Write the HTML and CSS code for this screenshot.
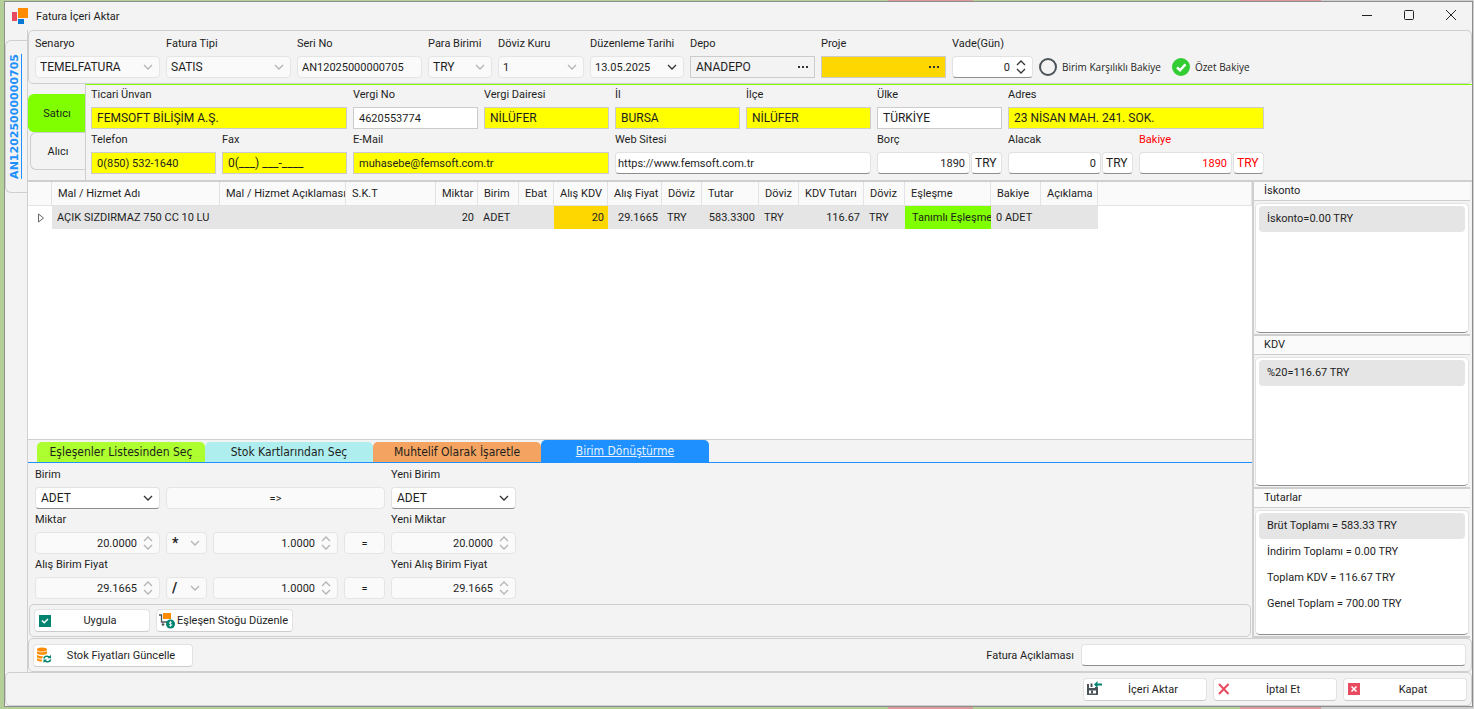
FILE: index.html
```html
<!DOCTYPE html>
<html lang="tr">
<head>
    <meta charset="UTF-8">
    <meta name="viewport" content="width=device-width, initial-scale=1.0">
    <title>Fatura İçeri Aktar</title>
    <link rel="stylesheet" href="styles.css">
</head>
<body>
    <!-- Shared icons -->
    <svg class="defs" width="0" height="0">
        <symbol id="chevron" viewBox="0 0 10 6"><path d="M1 1l4 4 4-4" fill="none" stroke="currentColor" stroke-width="1.3"/></symbol>
        <symbol id="spin" viewBox="0 0 10 14"><path d="M1 5l4-4 4 4M1 9l4 4 4-4" fill="none" stroke="currentColor" stroke-width="1.3"/></symbol>
        <symbol id="dots" viewBox="0 0 10 2"><path d="M0 0h2v2H0zM4 0h2v2H4zM8 0h2v2H8z" fill="currentColor"/></symbol>
    </svg>

    <div class="window">
        <header class="titlebar">
            <svg class="app-icon" viewBox="0 0 16 16">
                <path d="M0 4h5v9H0z" fill="#e84a5f"/>
                <path d="M6 0h10v10H6z" fill="#ff8c00"/>
                <path d="M6 11h6v5H6z" fill="#0078d4"/>
            </svg>
            <h1>Fatura İçeri Aktar</h1>
            <button class="win-btn" aria-label="Simge Durumuna Küçült"><svg viewBox="0 0 12 12"><path d="M1 6.500h10" stroke="#222" fill="none"/></svg></button>
            <button class="win-btn" aria-label="Ekranı Kapla"><svg viewBox="0 0 12 12"><rect x="1.500" y="1.500" width="9" height="9" rx="1" stroke="#222" fill="none"/></svg></button>
            <button class="win-btn" aria-label="Pencereyi Kapat"><svg viewBox="0 0 12 12"><path d="M1 1l10 10M11 1L1 11" stroke="#222" fill="none"/></svg></button>
        </header>

        <div class="workspace">
            <nav class="side-tabs">
                <button class="invoice-tab"><span>AN12025000000705</span></button>
            </nav>

            <main class="content">
                <section class="panel invoice-info">
                    <div class="field w-m">
                        <label for="senaryo">Senaryo</label>
                        <div class="control"><select id="senaryo" class="caps" disabled><option>TEMELFATURA</option></select><svg class="arrow"><use href="#chevron"/></svg></div>
                    </div>
                    <div class="field w-m">
                        <label for="tip">Fatura Tipi</label>
                        <div class="control"><select id="tip" class="caps" disabled><option>SATIS</option></select><svg class="arrow"><use href="#chevron"/></svg></div>
                    </div>
                    <div class="field w-m">
                        <label for="seri">Seri No</label>
                        <div class="control"><input id="seri" type="text" value="AN12025000000705" disabled></div>
                    </div>
                    <div class="field w-s">
                        <label for="para">Para Birimi</label>
                        <div class="control"><select id="para" class="caps" disabled><option>TRY</option></select><svg class="arrow"><use href="#chevron"/></svg></div>
                    </div>
                    <div class="field w-kur">
                        <label for="kur">Döviz Kuru</label>
                        <div class="control"><select id="kur" disabled><option>1</option></select><svg class="arrow"><use href="#chevron"/></svg></div>
                    </div>
                    <div class="field w-date">
                        <label for="tarih">Düzenleme Tarihi</label>
                        <div class="control"><input id="tarih" class="soft" type="text" value="13.05.2025"><svg class="arrow dark"><use href="#chevron"/></svg></div>
                    </div>
                    <div class="field w-m">
                        <label for="depo">Depo</label>
                        <div class="control"><input id="depo" class="square gray caps" type="text" value="ANADEPO"><svg class="arrow dots"><use href="#dots"/></svg></div>
                    </div>
                    <div class="field w-m">
                        <label for="proje">Proje</label>
                        <div class="control"><input id="proje" class="square gold" type="text"><svg class="arrow dots"><use href="#dots"/></svg></div>
                    </div>
                    <div class="field w-vade">
                        <label for="vade">Vade(Gün)</label>
                        <div class="control"><input id="vade" class="num spin" type="text" value="0"><svg class="arrow dark updown"><use href="#spin"/></svg></div>
                    </div>
                    <label class="toggle"><input type="checkbox">Birim Karşılıklı Bakiye</label>
                    <label class="toggle">
                        <input type="checkbox" checked>
                        <svg class="tick" viewBox="0 0 18 18"><path d="M5 9.300l3 3 5.500-6" fill="none" stroke="#fff" stroke-width="2.500"/></svg>
                        Özet Bakiye
                    </label>
                </section>

                <section class="party">
                    <div class="party-tabs">
                        <button class="party-tab active">Satıcı</button>
                        <button class="party-tab">Alıcı</button>
                    </div>
                    <div class="party-form">
                        <div class="field span-2"><label for="unvan">Ticari Ünvan</label><input id="unvan" class="square yellow caps" type="text" value="FEMSOFT BİLİŞİM A.Ş."></div>
                        <div class="field"><label for="vergino">Vergi No</label><input id="vergino" class="square" type="text" value="4620553774"></div>
                        <div class="field"><label for="daire">Vergi Dairesi</label><input id="daire" class="square yellow caps" type="text" value="NİLÜFER"></div>
                        <div class="field"><label for="il">İl</label><input id="il" class="square yellow caps" type="text" value="BURSA"></div>
                        <div class="field"><label for="ilce">İlçe</label><input id="ilce" class="square yellow caps" type="text" value="NİLÜFER"></div>
                        <div class="field"><label for="ulke">Ülke</label><input id="ulke" class="square caps" type="text" value="TÜRKİYE"></div>
                        <div class="field span-2"><label for="adres">Adres</label><input id="adres" class="square yellow caps" type="text" value="23 NİSAN MAH. 241. SOK."></div>

                        <div class="field"><label for="tel">Telefon</label><input id="tel" class="square yellow" type="text" value="0(850) 532-1640"></div>
                        <div class="field"><label for="fax">Fax</label><input id="fax" class="square yellow caps" type="text" value="0(___) ___-____"></div>
                        <div class="field span-2"><label for="mail">E-Mail</label><input id="mail" class="square yellow" type="text" value="muhasebe@femsoft.com.tr"></div>
                        <div class="field span-2"><label for="web">Web Sitesi</label><input id="web" class="tight" type="text" value="https://www.femsoft.com.tr"></div>
                        <div class="field"><label for="borc">Borç</label><div class="money"><input id="borc" class="num" type="text" value="1890"><input class="cur caps" type="text" value="TRY" aria-label="Borç dövizi"></div></div>
                        <div class="field"><label for="alacak">Alacak</label><div class="money"><input id="alacak" class="num" type="text" value="0"><input class="cur caps" type="text" value="TRY" aria-label="Alacak dövizi"></div></div>
                        <div class="field red"><label for="bakiye">Bakiye</label><div class="money"><input id="bakiye" class="num" type="text" value="1890"><input class="cur caps" type="text" value="TRY" aria-label="Bakiye dövizi"></div></div>
                    </div>
                </section>

                <div class="body-row">
                    <div class="left">
                        <div class="grid">
                            <table>
                                <colgroup>
                                    <col class="c24"><col class="c168"><col class="c126"><col class="c90"><col class="c42"><col class="c41"><col class="c35"><col class="c54"><col class="c54"><col class="c40"><col class="c57"><col class="c40"><col class="c65"><col class="c41"><col class="c86"><col class="c50"><col class="c57"><col>
                                </colgroup>
                                <thead>
                                    <tr>
                                        <th></th><th>Mal / Hizmet Adı</th><th>Mal / Hizmet Açıklaması</th><th>S.K.T</th><th>Miktar</th><th>Birim</th><th>Ebat</th><th>Alış KDV</th><th>Alış Fiyat</th><th>Döviz</th><th>Tutar</th><th>Döviz</th><th>KDV Tutarı</th><th>Döviz</th><th>Eşleşme</th><th>Bakiye</th><th>Açıklama</th><th></th>
                                    </tr>
                                </thead>
                                <tbody>
                                    <tr>
                                        <td class="marker"><svg viewBox="0 0 6 10"><path d="M.5 1v8L5.500 5z" fill="none" stroke="#666"/></svg></td>
                                        <td>AÇIK SIZDIRMAZ 750 CC 10 LU</td><td></td><td></td>
                                        <td class="r">20</td><td>ADET</td><td></td>
                                        <td class="r gold">20</td><td class="r">29.1665</td><td>TRY</td>
                                        <td class="r">583.3300</td><td>TRY</td>
                                        <td class="r">116.67</td><td>TRY</td>
                                        <td class="match">Tanımlı Eşleşme</td><td>0 ADET</td><td></td>
                                        <td class="rest"></td>
                                    </tr>
                                </tbody>
                            </table>
                        </div>

                        <nav class="tabs">
                            <button class="tab t-match">Eşleşenler Listesinden Seç</button>
                            <button class="tab t-stock">Stok Kartlarından Seç</button>
                            <button class="tab t-misc">Muhtelif Olarak İşaretle</button>
                            <button class="tab t-unit">Birim Dönüştürme</button>
                        </nav>

                        <div class="unit-form">
                            <div class="field"><label for="birim">Birim</label><div class="control"><select id="birim" class="caps"><option>ADET</option></select><svg class="arrow dark"><use href="#chevron"/></svg></div></div>
                            <button class="op span-3" disabled>=&gt;</button>
                            <div class="field"><label for="ybirim">Yeni Birim</label><div class="control"><select id="ybirim" class="caps"><option>ADET</option></select><svg class="arrow dark"><use href="#chevron"/></svg></div></div>

                            <div class="field"><label for="miktar">Miktar</label><div class="control"><input id="miktar" class="num spin" type="text" value="20.0000" disabled><svg class="arrow updown"><use href="#spin"/></svg></div></div>
                            <div class="control end"><select class="bold" aria-label="Miktar işlemi" disabled><option>*</option></select><svg class="arrow"><use href="#chevron"/></svg></div>
                            <div class="control end"><input class="num spin" type="text" value="1.0000" aria-label="Miktar katsayısı" disabled><svg class="arrow updown"><use href="#spin"/></svg></div>
                            <button class="op" disabled>=</button>
                            <div class="field"><label for="ymiktar">Yeni Miktar</label><div class="control"><input id="ymiktar" class="num spin" type="text" value="20.0000" disabled><svg class="arrow updown"><use href="#spin"/></svg></div></div>

                            <div class="field"><label for="fiyat">Alış Birim Fiyat</label><div class="control"><input id="fiyat" class="num spin" type="text" value="29.1665" disabled><svg class="arrow updown"><use href="#spin"/></svg></div></div>
                            <div class="control end"><select class="bold" aria-label="Fiyat işlemi" disabled><option>/</option></select><svg class="arrow"><use href="#chevron"/></svg></div>
                            <div class="control end"><input class="num spin" type="text" value="1.0000" aria-label="Fiyat katsayısı" disabled><svg class="arrow updown"><use href="#spin"/></svg></div>
                            <button class="op" disabled>=</button>
                            <div class="field"><label for="yfiyat">Yeni Alış Birim Fiyat</label><div class="control"><input id="yfiyat" class="num spin" type="text" value="29.1665" disabled><svg class="arrow updown"><use href="#spin"/></svg></div></div>
                        </div>

                        <div class="panel actions">
                            <button class="btn w-apply">
                                <svg viewBox="0 0 16 16"><path d="M2 2h12v12H2z" fill="#00836f"/><path d="M5 7.500l2.200 2.300L11 6" fill="none" stroke="#fff" stroke-width="1.500"/></svg>
                                <span>Uygula</span>
                            </button>
                            <button class="btn w-edit">
                                <svg viewBox="0 0 16 16"><path d="M0 2h2.500v7H11" fill="none" stroke="#4a5358" stroke-width="1.300"/><path d="M4 0h8v6H4z" fill="#ff8c00"/><circle cx="4" cy="11.500" r="1.300" fill="#4a5358"/><circle cx="11.500" cy="11" r="4.500" fill="#00836f"/><path d="M13 9.500c-1-.8-2.800-.6-2.800.5s2.800.8 2.800 1.900-1.900 1.300-3 .5M11.500 8.300v5.400" fill="none" stroke="#fff" stroke-width=".8"/></svg>
                                <span>Eşleşen Stoğu Düzenle</span>
                            </button>
                        </div>
                    </div>

                    <aside class="summary">
                        <section class="group g-discount">
                            <h2>İskonto</h2>
                            <ul><li class="selected">İskonto=0.00 TRY</li></ul>
                        </section>
                        <section class="group g-vat">
                            <h2>KDV</h2>
                            <ul><li class="selected">%20=116.67 TRY</li></ul>
                        </section>
                        <section class="group g-total">
                            <h2>Tutarlar</h2>
                            <ul>
                                <li class="selected">Brüt Toplamı = 583.33 TRY</li>
                                <li>İndirim Toplamı = 0.00 TRY</li>
                                <li>Toplam KDV = 116.67 TRY</li>
                                <li>Genel Toplam = 700.00 TRY</li>
                            </ul>
                        </section>
                    </aside>
                </div>

                <section class="panel note-row">
                    <button class="btn w-price">
                        <svg viewBox="0 0 16 16"><ellipse cx="6" cy="2.500" rx="5" ry="2" fill="#ff8c00"/><path d="M1 3.800c1 2 9 2 10 0v2.500c-1 2-9 2-10 0zM1 7.500c1 1.600 4 1.900 6 1.500L6 11.500c-2 .2-4.500-.2-5-1.500zM1 11c1 1.200 3 1.600 5 1.500v2c-2 .1-4.500-.2-5-1.500z" fill="#ff8c00"/><path d="M7.700 11.500c.6-2.600 4.300-3.200 5.900-1M14.700 12.500c-.6 2.600-4.300 3.200-5.900 1" fill="none" stroke="#00836f" stroke-width="1.500"/><path d="M15 7.800v3.500h-3.500zM7.500 16v-3.500H11z" fill="#00836f"/></svg>
                        <span>Stok Fiyatları Güncelle</span>
                    </button>
                    <label for="aciklama">Fatura Açıklaması</label>
                    <input id="aciklama" type="text">
                </section>
            </main>
        </div>

        <footer class="panel footer">
            <button class="btn w-foot">
                <svg viewBox="0 0 16 16"><path d="M1 3h2v4h6V6h3v8H1z" fill="#4a5358"/><path d="M4.500 2.500h2V6h-2z" fill="#4a5358"/><path d="M3 9.500h7v3H3z" fill="#fff"/><path d="M5 9.500h2v3H5z" fill="#4a5358"/><path d="M8 3.500L11.500 0v2.500H16v2h-4.500V7z" fill="#00836f"/></svg>
                <span>İçeri Aktar</span>
            </button>
            <button class="btn w-foot">
                <svg viewBox="0 0 16 16"><path d="M3 3l9.500 10M12.500 3L3 13" stroke="#e84a5f" stroke-width="2" fill="none"/></svg>
                <span>İptal Et</span>
            </button>
            <button class="btn w-foot">
                <svg viewBox="0 0 16 16"><path d="M2 2h12v12H2z" fill="#e84a5f"/><path d="M5.500 5.500l5 5M10.500 5.500l-5 5" stroke="#fff" stroke-width="1.600" fill="none"/></svg>
                <span>Kapat</span>
            </button>
        </footer>
    </div>
</body>
</html>
```
FILE: styles.css
```css
* {
    box-sizing: border-box;
}
body {
    margin: 0;
    height: 100vh;
    min-height: 660px;
    padding: 1px 1px 2px 4px;
    background: linear-gradient(90deg, #b4cf98 888px, #dd9c9c 888px, #dd9c9c 973px, #b4cf98 973px, #b4cf98 1240px, #dd9c9c 1240px, #dd9c9c 1321px, #cfcfcf 1321px);
    font-family: Roboto, sans-serif;
    font-size: 11px;
    color: #1e1e1e;
}
h1, h2, ul {
    margin: 0;
    padding: 0;
    font-size: 11px;
    font-weight: 400;
    list-style: none;
}
button, input, select {
    font: inherit;
    color: inherit;
    opacity: 1;
    margin: 0;
}
.defs {
    position: absolute;
}
.window {
    height: 100%;
    display: flex;
    flex-direction: column;
    background: #f3f3f3;
    border: 1px solid #8e8e8e;
}
.panel {
    border: 1px solid #cfcfcf;
    border-radius: 5px;
}

/* Title bar */
.titlebar {
    height: 28px;
    display: flex;
    align-items: center;
    padding-left: 7px;
}
.titlebar h1 {
    flex: 1;
    padding-left: 8px;
}
.app-icon {
    width: 16px;
    height: 16px;
}
.win-btn {
    width: 42px;
    height: 28px;
    padding: 0;
    border: 0;
    background: none;
}
.win-btn svg {
    width: 12px;
    height: 12px;
}

/* Left vertical tab */
.workspace {
    flex: 1;
    min-height: 0;
    display: flex;
}
.side-tabs {
    width: 22px;
    padding-top: 10px;
}
.invoice-tab {
    width: 22px;
    height: 153px;
    padding: 0 0 0 3px;
    border: 1px solid #cfcfcf;
    border-right: 0;
    border-radius: 6px 0 0 6px;
    background: #f3f3f3;
    display: flex;
    align-items: center;
    color: #1e90ff;
    font: bold 11px "DejaVu Sans", sans-serif;
}
.invoice-tab span {
    writing-mode: vertical-rl;
    transform: rotate(180deg);
    line-height: 12px;
    border-left: 1px solid #1e90ff;
}
.content {
    flex: 1;
    min-width: 0;
    display: flex;
    flex-direction: column;
    border-left: 1px solid #cfcfcf;
}

/* Fields */
.field label {
    display: block;
    line-height: 16px;
    margin-bottom: 4px;
    white-space: nowrap;
}
input[type=text], select {
    display: block;
    width: 100%;
    height: 22px;
    padding: 0 5px;
    border: 1px solid #e2e2e2;
    border-bottom-color: #8e8e8e;
    border-radius: 4px;
    background: #fff;
    appearance: none;
    outline: none;
}
input.caps, select.caps {
    font-size: 12px;
}
input.square {
    border-color: #cccccc;
    border-radius: 0;
}
input.soft, input:disabled, select:disabled {
    padding: 0 4px;
    border-color: #e5e5e5;
    background: #fafafa;
}
input.tight {
    padding: 0 2px;
}
input.yellow {
    background: #ffff00;
}
input.gray {
    background: #f3f3f3;
}
input.gold, .gold {
    background: #ffd700;
}
input.num {
    text-align: right;
    padding: 0 4px;
}
input.spin {
    padding-right: 22px;
}
select.bold {
    padding-left: 5px;
    font-size: 14px;
    font-weight: 700;
}
.control {
    position: relative;
}
.arrow {
    position: absolute;
    right: 7px;
    top: 8px;
    width: 10px;
    height: 6px;
    color: #b4b4b4;
    pointer-events: none;
}
.arrow.dark {
    color: #333;
}
.arrow.dots {
    top: 10px;
    height: 2px;
    color: #333;
}
.arrow.updown {
    top: 4px;
    height: 14px;
}
.w-s { width: 64px; }
.w-m { width: 125px; }
.w-kur { width: 86px; }
.w-date { width: 94px; }
.w-vade { width: 81px; }

/* Invoice header row */
.invoice-info {
    display: flex;
    gap: 6px;
    padding: 5px 6px;
    height: 54px;
}
.toggle {
    position: relative;
    align-self: flex-end;
    height: 22px;
    display: flex;
    align-items: center;
    gap: 5px;
    margin-right: 5px;
    white-space: nowrap;
    font: 10px "Open Sans", sans-serif;
}
.toggle input {
    width: 18px;
    height: 18px;
    border: 2px solid #4a5358;
    border-radius: 50%;
    appearance: none;
}
.toggle input:checked {
    border-color: #32cd32;
    background: #32cd32;
}
.tick {
    position: absolute;
    left: 0;
    top: 2px;
    width: 18px;
    height: 18px;
}

/* Seller / buyer */
.party {
    display: flex;
    height: 96px;
}
.party-tabs {
    width: 57px;
    padding-top: 10px;
    display: flex;
    flex-direction: column;
}
.party-tab {
    height: 38px;
    margin-left: 2px;
    border: 1px solid #cfcfcf;
    border-right: 0;
    border-radius: 6px 0 0 6px;
    background: #f3f3f3;
}
.party-tab.active {
    margin-left: 0;
    border-color: #7fff00;
    background: #7fff00;
}
.party-form {
    flex: 1;
    display: grid;
    grid-template-columns: repeat(9, 125px);
    gap: 3px 6px;
    align-content: start;
    padding: 2px 5px;
    border-top: 1px solid #7fff00;
    border-left: 1px solid #cfcfcf;
}
.span-2 { grid-column: span 2; }
.span-3 { grid-column: span 3; }
.money {
    display: flex;
    gap: 1px;
}
.money input.num {
    flex: 1;
    min-width: 0;
}
.money input.cur {
    width: 31px;
    padding: 0 3px;
}
.red {
    color: #ff0000;
}

/* Item grid */
.body-row {
    flex: 1;
    min-height: 0;
    display: flex;
    border-top: 2px solid #cfcfcf;
}
.left {
    flex: 1;
    min-width: 0;
    display: flex;
    flex-direction: column;
}
.grid {
    flex: 1;
    min-height: 0;
    overflow: hidden;
    background: #fff;
    border-bottom: 1px solid #cfcfcf;
}
table {
    width: 100%;
    table-layout: fixed;
    border-collapse: separate;
    border-spacing: 0;
}
th, td {
    padding: 0 0 0 5px;
    height: 24px;
    text-align: left;
    font-weight: 400;
    white-space: nowrap;
    overflow: hidden;
}
th {
    padding-left: 6px;
    background: #fafafa;
    border-right: 1px solid #e3e3e3;
    border-bottom: 1px solid #e3e3e3;
}
td {
    height: 23px;
    background: #e5e5e5;
}
td.r {
    padding-right: 4px;
    text-align: right;
}
td.gold {
    background: #ffd700;
}
td.match {
    padding-left: 7px;
    background: #7fff00;
}
td.marker, td.rest {
    background: #fff;
}
td.marker svg {
    display: block;
    width: 6px;
    height: 10px;
    margin-left: 5px;
}
.c24 { width: 24px; }
.c35 { width: 35px; }
.c40 { width: 40px; }
.c41 { width: 41px; }
.c42 { width: 42px; }
.c50 { width: 50px; }
.c54 { width: 54px; }
.c57 { width: 57px; }
.c65 { width: 65px; }
.c86 { width: 86px; }
.c90 { width: 90px; }
.c126 { width: 126px; }
.c168 { width: 168px; }

/* Matching tabs */
.tabs {
    display: flex;
    align-items: flex-end;
    height: 23px;
    padding-left: 9px;
    border-bottom: 1px solid #1e90ff;
}
.tab {
    width: 168px;
    height: 20px;
    padding: 0;
    border: 0;
    border-radius: 5px 5px 0 0;
    font: 12px "DejaVu Sans Condensed", sans-serif;
}
.t-match { background: #adff2f; }
.t-stock { background: #afeeee; }
.t-misc { background: #f4a460; }
.t-unit {
    height: 22px;
    background: #1e90ff;
    color: #e6f2ff;
    text-decoration: underline;
}

/* Unit conversion */
.unit-form {
    display: grid;
    grid-template-columns: 125px 41px 125px 41px 125px;
    gap: 3px 6px;
    padding: 4px 7px;
}
.end {
    align-self: end;
}
.op {
    align-self: end;
    height: 22px;
    padding: 0;
    border: 1px solid #e5e5e5;
    border-radius: 4px;
    background: #fafafa;
}
.actions {
    display: flex;
    gap: 6px;
    margin: 1px;
    padding: 4px;
}
.btn {
    height: 23px;
    display: flex;
    align-items: center;
    padding: 0 2px;
    border: 1px solid #e2e2e2;
    border-bottom-color: #cccccc;
    border-radius: 4px;
    background: #fff;
    white-space: nowrap;
}
.btn svg {
    flex-shrink: 0;
    width: 16px;
    height: 16px;
}
.btn span {
    flex: 1;
    text-align: center;
}
.w-apply { width: 116px; }
.w-edit { width: 137px; }
.w-price { width: 160px; }
.w-foot { width: 124px; }

/* Totals */
.summary {
    width: 220px;
    display: flex;
    flex-direction: column;
    padding-right: 2px;
    border-left: 2px solid #cfcfcf;
}
.group {
    display: flex;
    flex-direction: column;
    border-bottom: 2px solid #cfcfcf;
}
.g-discount { flex: 154 1 0; }
.g-vat { flex: 152 1 0; }
.g-total { flex: 149 1 0; }
.group h2 {
    height: 19px;
    padding-left: 10px;
    line-height: 18px;
    background: #fafafa;
    border-bottom: 1px solid #cfcfcf;
}
.group ul {
    flex: 1;
    margin: 2px 1px 1px;
    padding: 2px 3px;
    background: #fff;
    border: 1px solid #e2e2e2;
    border-bottom-color: #8e8e8e;
    border-radius: 5px;
}
.group li {
    height: 26px;
    padding-left: 8px;
    line-height: 26px;
    border-radius: 4px;
}
.group li.selected {
    background: #e5e5e5;
}

/* Bottom rows */
.note-row {
    display: flex;
    align-items: center;
    height: 34px;
    padding: 0 5px 0 4px;
}
.note-row label {
    margin-left: auto;
    padding-right: 7px;
}
.note-row input[type=text] {
    width: 385px;
}
.footer {
    display: flex;
    justify-content: flex-end;
    align-items: center;
    gap: 6px;
    height: 34px;
    padding-right: 4px;
}
```
